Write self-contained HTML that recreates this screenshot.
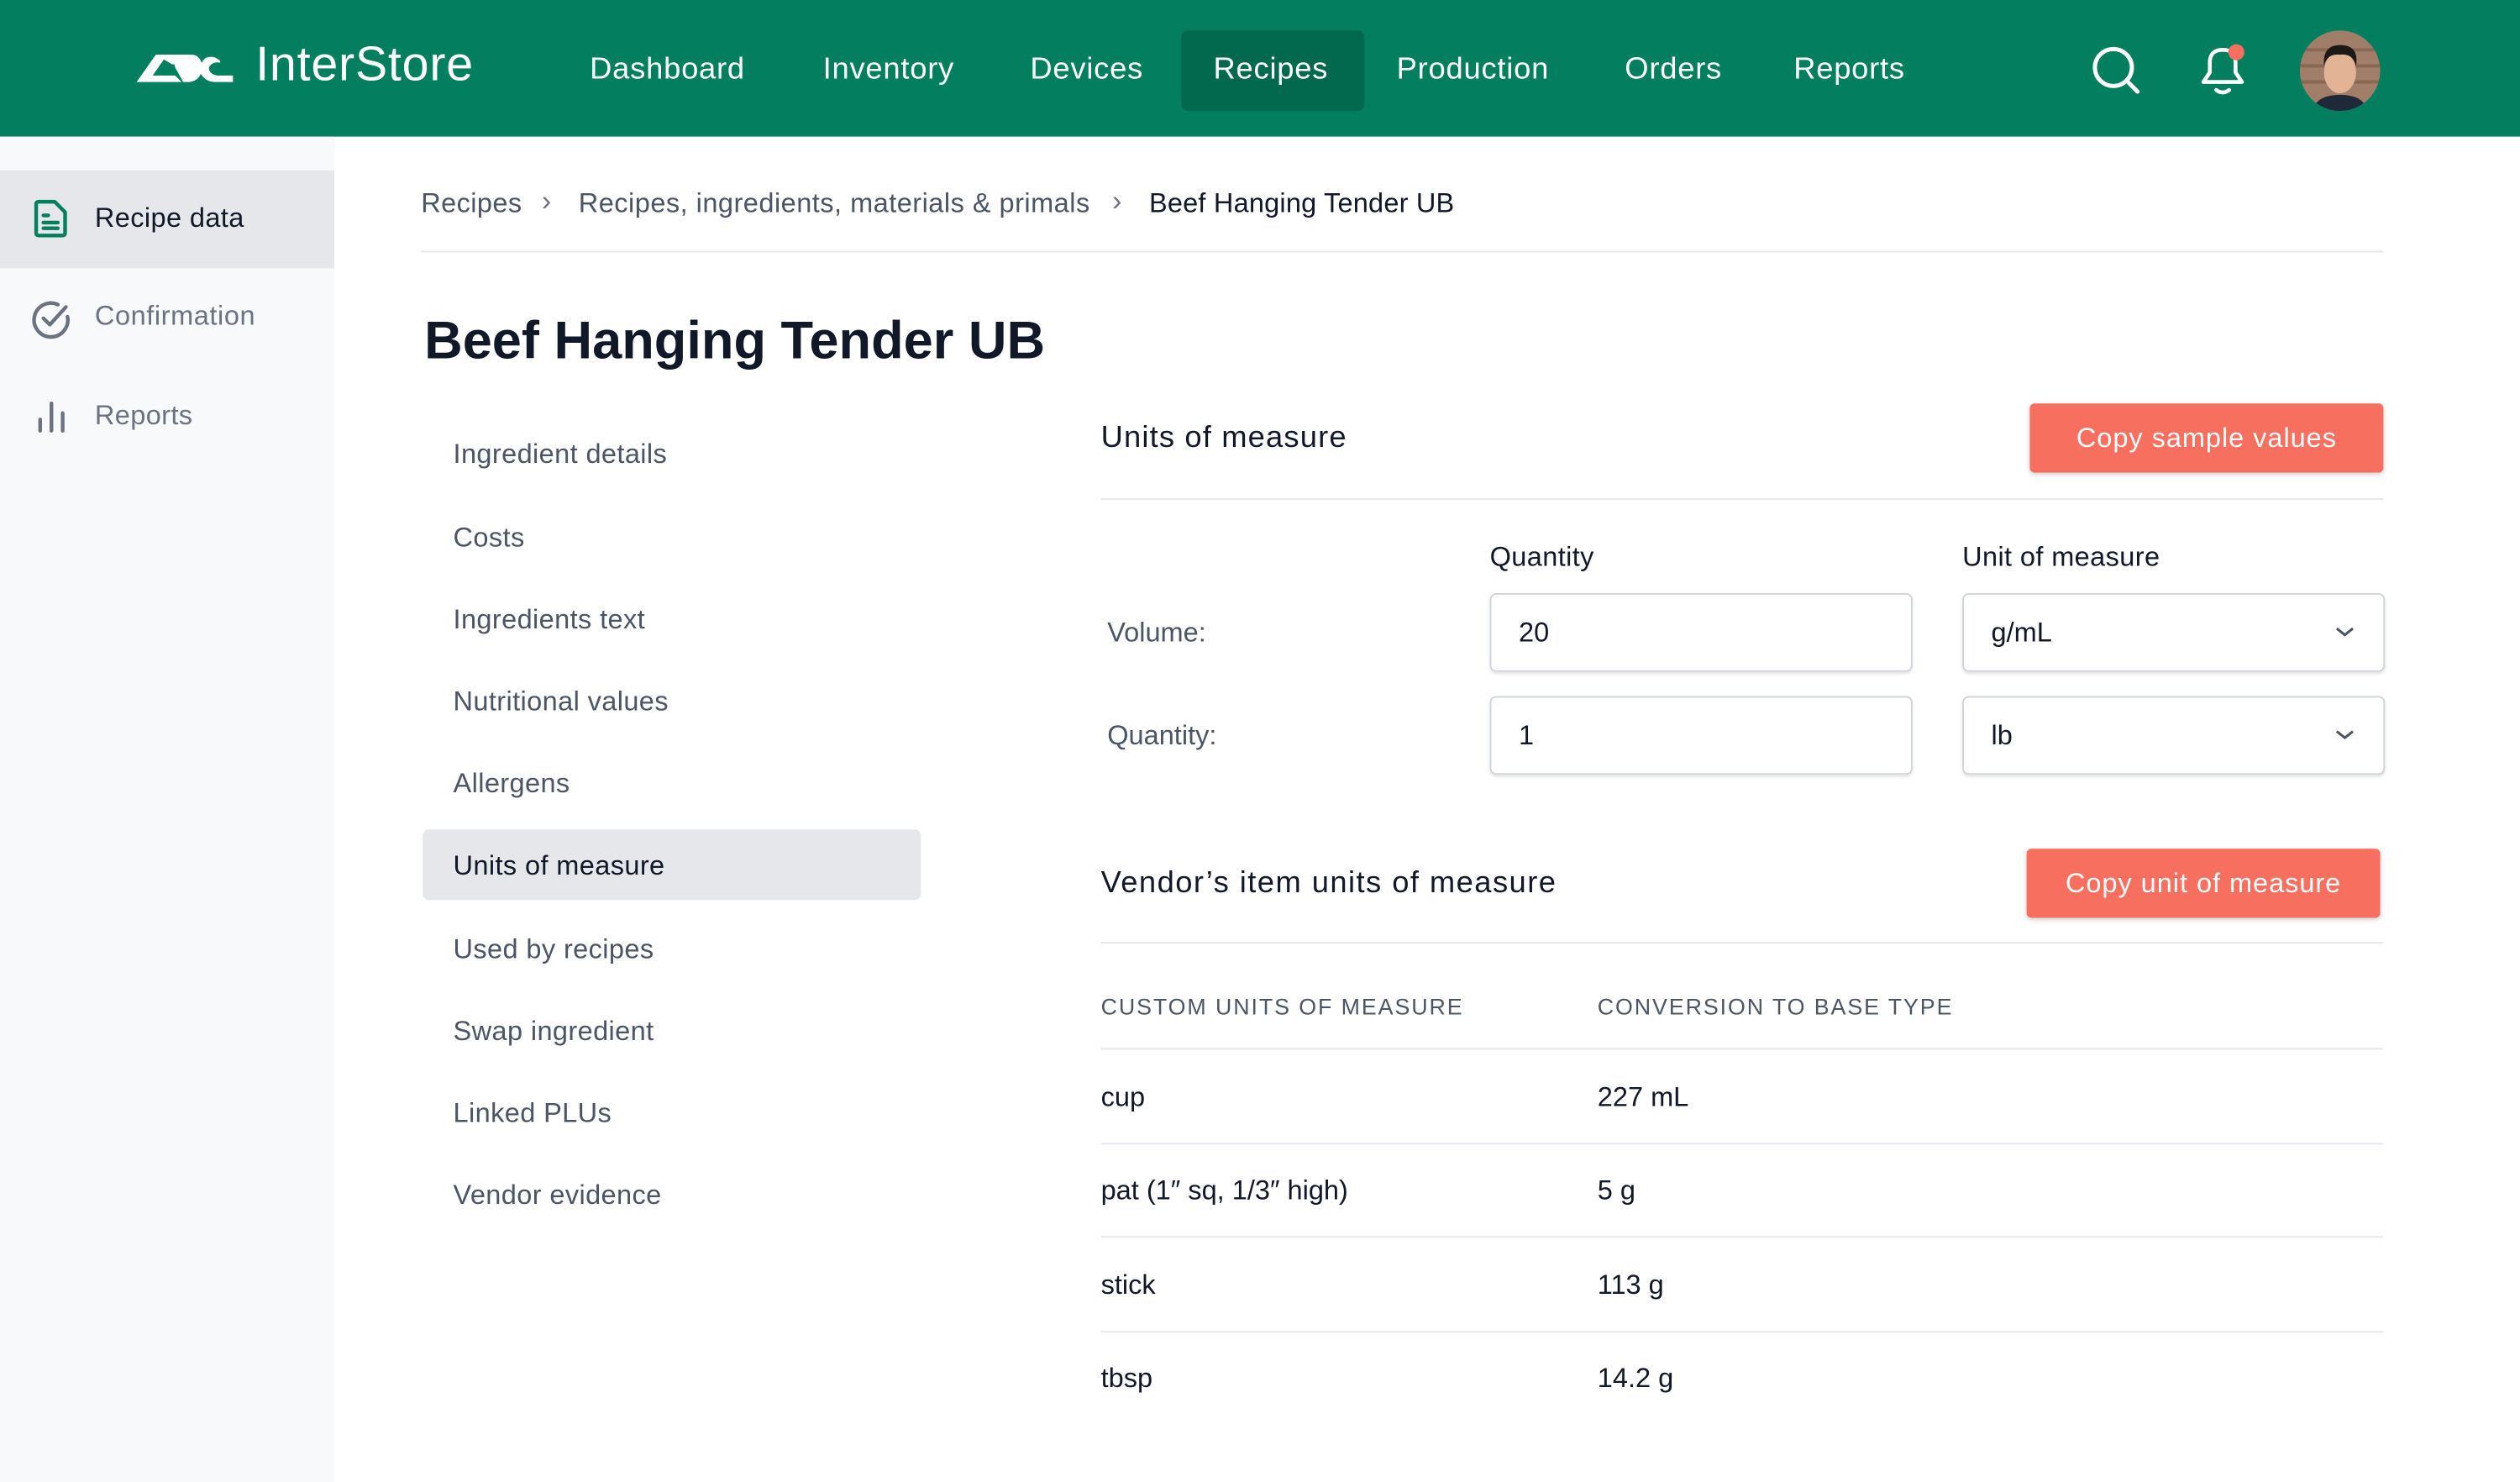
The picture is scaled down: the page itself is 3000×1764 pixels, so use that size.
<!DOCTYPE html>
<html><head><meta charset="utf-8"><style>
*{margin:0;padding:0;box-sizing:border-box}
html,body{width:3000px;height:1764px;overflow:hidden;background:#fff}
#w{width:1568px;height:922px;transform:scale(1.913265);transform-origin:0 0;position:relative;font-family:"Liberation Sans",sans-serif;color:#111827}
.a{position:absolute;white-space:nowrap}
.hdr{position:absolute;left:0;top:0;width:1568px;height:85px;background:#037f5f}
.nav{position:absolute;top:20px;height:50px;line-height:48px;color:#fff;font-size:19px;letter-spacing:.4px}
.side{position:absolute;left:0;top:85px;width:208px;height:837px;background:#f8f9fb}
.sn{position:absolute;left:282px;font-size:17px;color:#4b5563;letter-spacing:.2px}
.hr{position:absolute;height:1px;background:#e5e7eb}
.btn{position:absolute;background:#f76f5e;color:#fff;font-size:17px;text-align:center;border-radius:3px;box-shadow:0 1px 3px rgba(0,0,0,.2);letter-spacing:.5px}
.inp{position:absolute;width:263px;height:49px;border:1px solid #d1d5db;border-radius:4px;box-shadow:0 1px 2px rgba(0,0,0,.12);font-size:17px;line-height:47px;padding-left:17px}
.td{position:absolute;font-size:17px;color:#111827}
</style></head><body><div id="w">
<div class="hdr"></div>
<svg class="a" style="left:85px;top:31px" width="60" height="22" viewBox="0 0 60 22"><path d="M0 20 L12 3 L26 3 L30 9 L22 9 L17 6 L10 16 L24 16 L28 20 Z M22 3 L34 3 Q40 3 41 11 Q40 19 33 20 L29 20 L24 11 Z" fill="#fff"/><path d="M52 7 Q48 3 43 5 Q38 9 40 15 Q43 20 49 20 L60 20 L60 16 L50 16 Q45 15 45 11 Q47 7 52 8 Z" fill="#fff"/></svg>
<div class="a" style="left:159px;top:24px;font-size:30px;color:#fff;letter-spacing:.4px">InterStore</div>
<div class="a" style="left:735px;top:19px;width:114px;height:50px;background:#02684e;border-radius:4px"></div>
<div class="nav" style="left:367px">Dashboard</div>
<div class="nav" style="left:512px">Inventory</div>
<div class="nav" style="left:641px">Devices</div>
<div class="nav" style="left:755px">Recipes</div>
<div class="nav" style="left:869px">Production</div>
<div class="nav" style="left:1011px">Orders</div>
<div class="nav" style="left:1116px">Reports</div>
<svg class="a" style="left:1300px;top:27px" width="34" height="34" viewBox="0 0 34 34"><circle cx="15" cy="15" r="11.5" fill="none" stroke="#fff" stroke-width="2.6"/><path d="M23.5 23.5 L30 30" stroke="#fff" stroke-width="2.6" stroke-linecap="round"/></svg>
<svg class="a" style="left:1366px;top:26px" width="34" height="34" viewBox="0 0 34 34"><path d="M5 25 L9 19 L9 13 Q9 5 17 5 Q25 5 25 13 L25 19 L29 25 Z" fill="none" stroke="#fff" stroke-width="2.4" stroke-linejoin="round"/><path d="M13 30 Q17 33 21 30" fill="none" stroke="#fff" stroke-width="2.4" stroke-linecap="round"/><circle cx="25.5" cy="6.5" r="5" fill="#f76f5e"/></svg>
<svg class="a" style="left:1431px;top:19px" width="50" height="50" viewBox="0 0 50 50"><defs><clipPath id="c"><circle cx="25" cy="25" r="25"/></clipPath></defs><g clip-path="url(#c)"><rect width="50" height="50" fill="#a07e69"/><path d="M0 12 H50 M0 22 H50 M0 32 H50" stroke="#8a6755" stroke-width="2"/><path d="M8 50 Q10 40 25 40 Q40 40 42 50 Z" fill="#1f2937"/><ellipse cx="25" cy="26" rx="10" ry="13" fill="#e2b394"/><path d="M15 22 Q14 9 25 9 Q37 9 35 22 Q33 14 25 15 Q17 14 15 22 Z" fill="#1c1917"/></g></svg>
<div class="side"></div>
<div class="a" style="left:0;top:106px;width:208px;height:61px;background:#e5e7eb"></div>
<svg class="a" style="left:21px;top:124px" width="22" height="24" viewBox="0 0 22 24"><path d="M3 1.5 H13 L19.5 8 V21 Q19.5 22.5 18 22.5 H3 Q1.5 22.5 1.5 21 V3 Q1.5 1.5 3 1.5 Z" fill="none" stroke="#037f5f" stroke-width="2.3" stroke-linejoin="round"/><path d="M6 10 H9 M6 14.5 H15 M6 18 H15" stroke="#037f5f" stroke-width="2.3" stroke-linecap="round"/></svg>
<div class="a" style="left:59px;top:126px;font-size:17px;color:#111827;letter-spacing:.2px">Recipe data</div>
<svg class="a" style="left:19px;top:186px" width="26" height="26" viewBox="0 0 26 26"><path d="M23 11 A10.5 10.5 0 1 1 17 3.5" fill="none" stroke="#6b7280" stroke-width="2.3" stroke-linecap="round"/><path d="M8 12 L12 16 L22 5" fill="none" stroke="#6b7280" stroke-width="2.3" stroke-linecap="round" stroke-linejoin="round"/></svg>
<div class="a" style="left:59px;top:187px;font-size:17px;color:#6b7280;letter-spacing:.3px">Confirmation</div>
<svg class="a" style="left:22px;top:248px" width="20" height="22" viewBox="0 0 20 22"><path d="M3 13 V20 M10 3 V20 M17 9 V20" stroke="#6b7280" stroke-width="2.3" stroke-linecap="round"/></svg>
<div class="a" style="left:59px;top:249px;font-size:17px;color:#6b7280;letter-spacing:.2px">Reports</div>
<div class="a" style="left:262px;top:117px;font-size:17px;color:#4b5563;letter-spacing:.2px">Recipes</div>
<div class="a" style="left:337px;top:115px;font-size:18px;color:#6b7280">›</div>
<div class="a" style="left:360px;top:117px;font-size:17px;color:#4b5563;letter-spacing:.25px">Recipes, ingredients, materials &amp; primals</div>
<div class="a" style="left:692px;top:115px;font-size:18px;color:#6b7280">›</div>
<div class="a" style="left:715px;top:117px;font-size:17px;color:#111827;letter-spacing:.1px">Beef Hanging Tender UB</div>
<div class="hr" style="left:262px;top:156px;width:1221px"></div>
<div class="a" style="left:264px;top:193px;font-size:33px;font-weight:bold;color:#111827">Beef Hanging Tender UB</div>
<div class="a" style="left:263px;top:516px;width:310px;height:44px;background:#e5e7eb;border-radius:4px"></div>
<div class="sn" style="top:273px">Ingredient details</div>
<div class="sn" style="top:325px">Costs</div>
<div class="sn" style="top:376px">Ingredients text</div>
<div class="sn" style="top:427px">Nutritional values</div>
<div class="sn" style="top:478px">Allergens</div>
<div class="sn" style="top:529px;color:#111827">Units of measure</div>
<div class="sn" style="top:581px">Used by recipes</div>
<div class="sn" style="top:632px">Swap ingredient</div>
<div class="sn" style="top:683px">Linked PLUs</div>
<div class="sn" style="top:734px">Vendor evidence</div>
<div class="a" style="left:685px;top:262px;font-size:19px;letter-spacing:.6px">Units of measure</div>
<div class="btn" style="left:1263px;top:251px;width:220px;height:43px;line-height:43px">Copy sample values</div>
<div class="hr" style="left:685px;top:310px;width:798px"></div>
<div class="a" style="left:927px;top:337px;font-size:17px;letter-spacing:.2px">Quantity</div>
<div class="a" style="left:1221px;top:337px;font-size:17px;letter-spacing:.2px">Unit of measure</div>
<div class="a" style="left:689px;top:384px;font-size:17px;color:#4b5563">Volume:</div>
<div class="a" style="left:689px;top:448px;font-size:17px;color:#4b5563">Quantity:</div>
<div class="inp" style="left:927px;top:369px">20</div>
<div class="inp" style="left:1221px;top:369px">g/mL</div>
<div class="inp" style="left:927px;top:433px">1</div>
<div class="inp" style="left:1221px;top:433px">lb</div>
<svg class="a" style="left:1453px;top:388px" width="12" height="10" viewBox="0 0 12 10"><path d="M1 3 L6 7 L11 3" fill="none" stroke="#4b5563" stroke-width="1.6"/></svg>
<svg class="a" style="left:1453px;top:452px" width="12" height="10" viewBox="0 0 12 10"><path d="M1 3 L6 7 L11 3" fill="none" stroke="#4b5563" stroke-width="1.6"/></svg>
<div class="a" style="left:685px;top:539px;font-size:19px;letter-spacing:.75px">Vendor’s item units of measure</div>
<div class="btn" style="left:1261px;top:528px;width:220px;height:43px;line-height:43px">Copy unit of measure</div>
<div class="hr" style="left:685px;top:586px;width:798px"></div>
<div class="a" style="left:685px;top:618px;font-size:14px;letter-spacing:1px;color:#4b5563">CUSTOM UNITS OF MEASURE</div>
<div class="a" style="left:994px;top:618px;font-size:14px;letter-spacing:1px;color:#4b5563">CONVERSION TO BASE TYPE</div>
<div class="hr" style="left:685px;top:652px;width:798px"></div>
<div class="hr" style="left:685px;top:711px;width:798px"></div>
<div class="hr" style="left:685px;top:769px;width:798px"></div>
<div class="hr" style="left:685px;top:828px;width:798px"></div>
<div class="td" style="left:685px;top:673px">cup</div><div class="td" style="left:994px;top:673px">227 mL</div>
<div class="td" style="left:685px;top:731px">pat (1″ sq, 1/3″ high)</div><div class="td" style="left:994px;top:731px">5 g</div>
<div class="td" style="left:685px;top:790px">stick</div><div class="td" style="left:994px;top:790px">113 g</div>
<div class="td" style="left:685px;top:848px">tbsp</div><div class="td" style="left:994px;top:848px">14.2 g</div>
</div></body></html>
